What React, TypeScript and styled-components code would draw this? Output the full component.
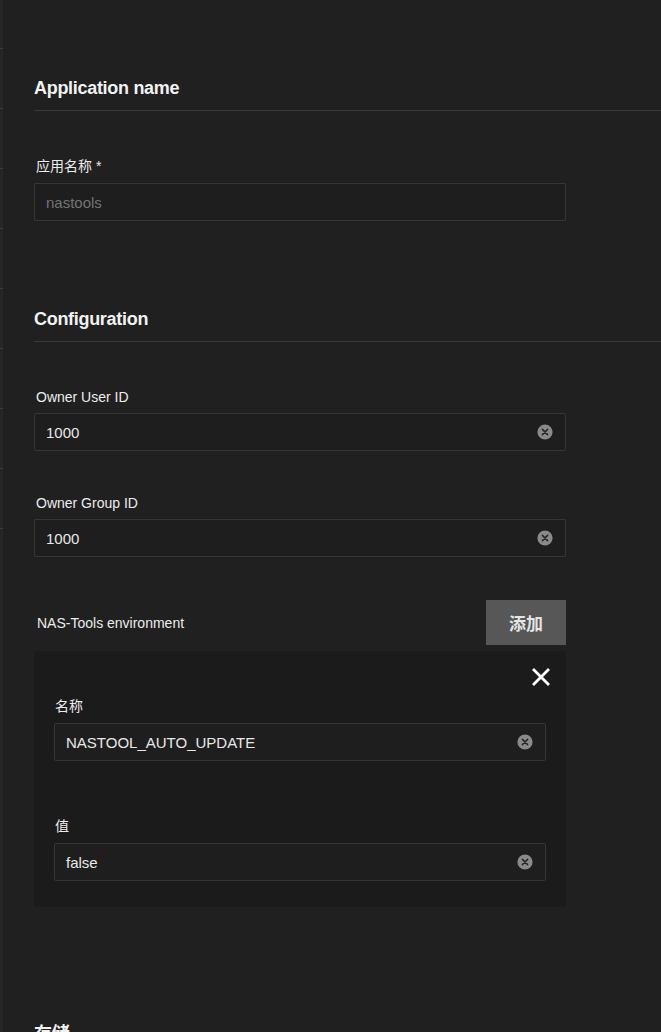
import React from "react";
import styled, { createGlobalStyle } from "styled-components";

const Global = createGlobalStyle`
  html, body { margin: 0; padding: 0; background: #202020; }
  body { font-family: "Liberation Sans", Arial, "Noto Sans CJK SC", sans-serif; color: #e6e6e6; }
  * { box-sizing: border-box; }
`;

const Page = styled.div`
  display: flex;
  height: 1032px;
  overflow: hidden;
  background: #202020;
`;

const Rail = styled.div`
  width: 3px;
  flex: none;
  background: #262626;
  display: flex;
  flex-direction: column;
  gap: 59px;
  padding-top: 48px;
`;

const Tick = styled.span`
  display: block;
  height: 1px;
  width: 3px;
  background: #3c3c3c;
`;

const Content = styled.div`
  flex: 1;
  padding: 77px 0 0 31px;
  display: flex;
  flex-direction: column;
`;

const Section = styled.section<{ $gap: number }>`
  margin-bottom: ${(p) => p.$gap}px;
`;

const Heading = styled.h2`
  margin: 0;
  font-size: 18px;
  line-height: 22px;
  font-weight: 700;
  color: #f2f2f2;
  letter-spacing: -0.3px;
  padding-bottom: 11px;
  border-bottom: 1px solid #3a3a3a;
  margin-bottom: 46px;
`;

const FormCol = styled.div`
  width: 532px;
  display: flex;
  flex-direction: column;
  gap: 43px;
`;

const Field = styled.div<{ $gap?: number }>`
  display: flex;
  flex-direction: column;
  gap: ${(p) => p.$gap ?? 7}px;
`;

const Label = styled.label<{ $lh?: number; $indent?: number }>`
  font-size: 14px;
  line-height: ${(p) => p.$lh ?? 18}px;
  color: #ececec;
  padding-left: ${(p) => p.$indent ?? 2}px;
  font-family: "Liberation Sans", Arial, "Noto Sans CJK SC", sans-serif;
`;

const InputBox = styled.div`
  height: 38px;
  border: 1px solid #363636;
  border-radius: 2px;
  background: #1e1e1e;
  display: flex;
  align-items: center;
  padding: 0 12px 0 11px;
`;

const Value = styled.span<{ $placeholder?: boolean }>`
  flex: 1;
  font-size: 15px;
  color: ${(p) => (p.$placeholder ? "#737373" : "#e8e8e8")};
`;

const EnvRow = styled.div`
  display: flex;
  align-items: center;
  justify-content: space-between;
  height: 45px;
`;

const EnvTitle = styled.span`
  font-size: 14px;
  color: #ececec;
  padding-left: 3px;
`;

const AddButton = styled.button`
  width: 80px;
  height: 45px;
  border: none;
  border-radius: 0;
  background: #575757;
  color: #e4e4e4;
  font-size: 17px;
  font-weight: 700;
  font-family: "Noto Sans CJK SC", sans-serif;
`;

const Card = styled.div`
  margin-top: 6px;
  background: #1b1b1b;
  padding: 15px 20px 26px 20px;
  display: flex;
  flex-direction: column;
`;

const CardHead = styled.div`
  display: flex;
  justify-content: flex-end;
  align-items: center;
  height: 22px;
  margin-bottom: 9px;
  margin-right: -5px;
`;

const CardFields = styled.div`
  display: flex;
  flex-direction: column;
  gap: 56px;
`;

const ClearIcon = () => (
  <svg width="16" height="16" viewBox="0 0 16 16">
    <circle cx="8" cy="8" r="7.6" fill="#8a8a8a" />
    <path d="M5.4 5.4 L10.6 10.6 M10.6 5.4 L5.4 10.6" stroke="#262626" strokeWidth="1.5" strokeLinecap="round" />
  </svg>
);

const CloseIcon = () => (
  <svg width="20" height="20" viewBox="0 0 20 20">
    <path d="M2 2 L18 18 M18 2 L2 18" stroke="#ffffff" strokeWidth="2.8" strokeLinecap="butt" />
  </svg>
);

const Input = ({ value, placeholder, clear = true }: { value: string; placeholder?: boolean; clear?: boolean }) => (
  <InputBox>
    <Value $placeholder={placeholder}>{value}</Value>
    {clear && <ClearIcon />}
  </InputBox>
);

export default function App() {
  return (
    <>
      <Global />
      <Page>
        <Rail>
          {Array.from({ length: 9 }).map((_, i) => (
            <Tick key={i} />
          ))}
        </Rail>
        <Content>
          <Section $gap={87}>
            <Heading>Application name</Heading>
            <FormCol>
              <Field>
                <Label $lh={19}>应用名称 *</Label>
                <Input value="nastools" placeholder clear={false} />
              </Field>
            </FormCol>
          </Section>
          <Section $gap={116}>
            <Heading>Configuration</Heading>
            <FormCol>
              <Field>
                <Label>Owner User ID</Label>
                <Input value="1000" />
              </Field>
              <Field>
                <Label>Owner Group ID</Label>
                <Input value="1000" />
              </Field>
              <div>
                <EnvRow>
                  <EnvTitle>NAS-Tools environment</EnvTitle>
                  <AddButton>添加</AddButton>
                </EnvRow>
                <Card>
                  <CardHead>
                    <CloseIcon />
                  </CardHead>
                  <CardFields>
                    <Field $gap={8}>
                      <Label $indent={1}>名称</Label>
                      <Input value="NASTOOL_AUTO_UPDATE" />
                    </Field>
                    <Field $gap={8}>
                      <Label $indent={1}>值</Label>
                      <Input value="false" />
                    </Field>
                  </CardFields>
                </Card>
              </div>
            </FormCol>
          </Section>
          <Section $gap={0}>
            <Heading>存储</Heading>
          </Section>
        </Content>
      </Page>
    </>
  );
}
